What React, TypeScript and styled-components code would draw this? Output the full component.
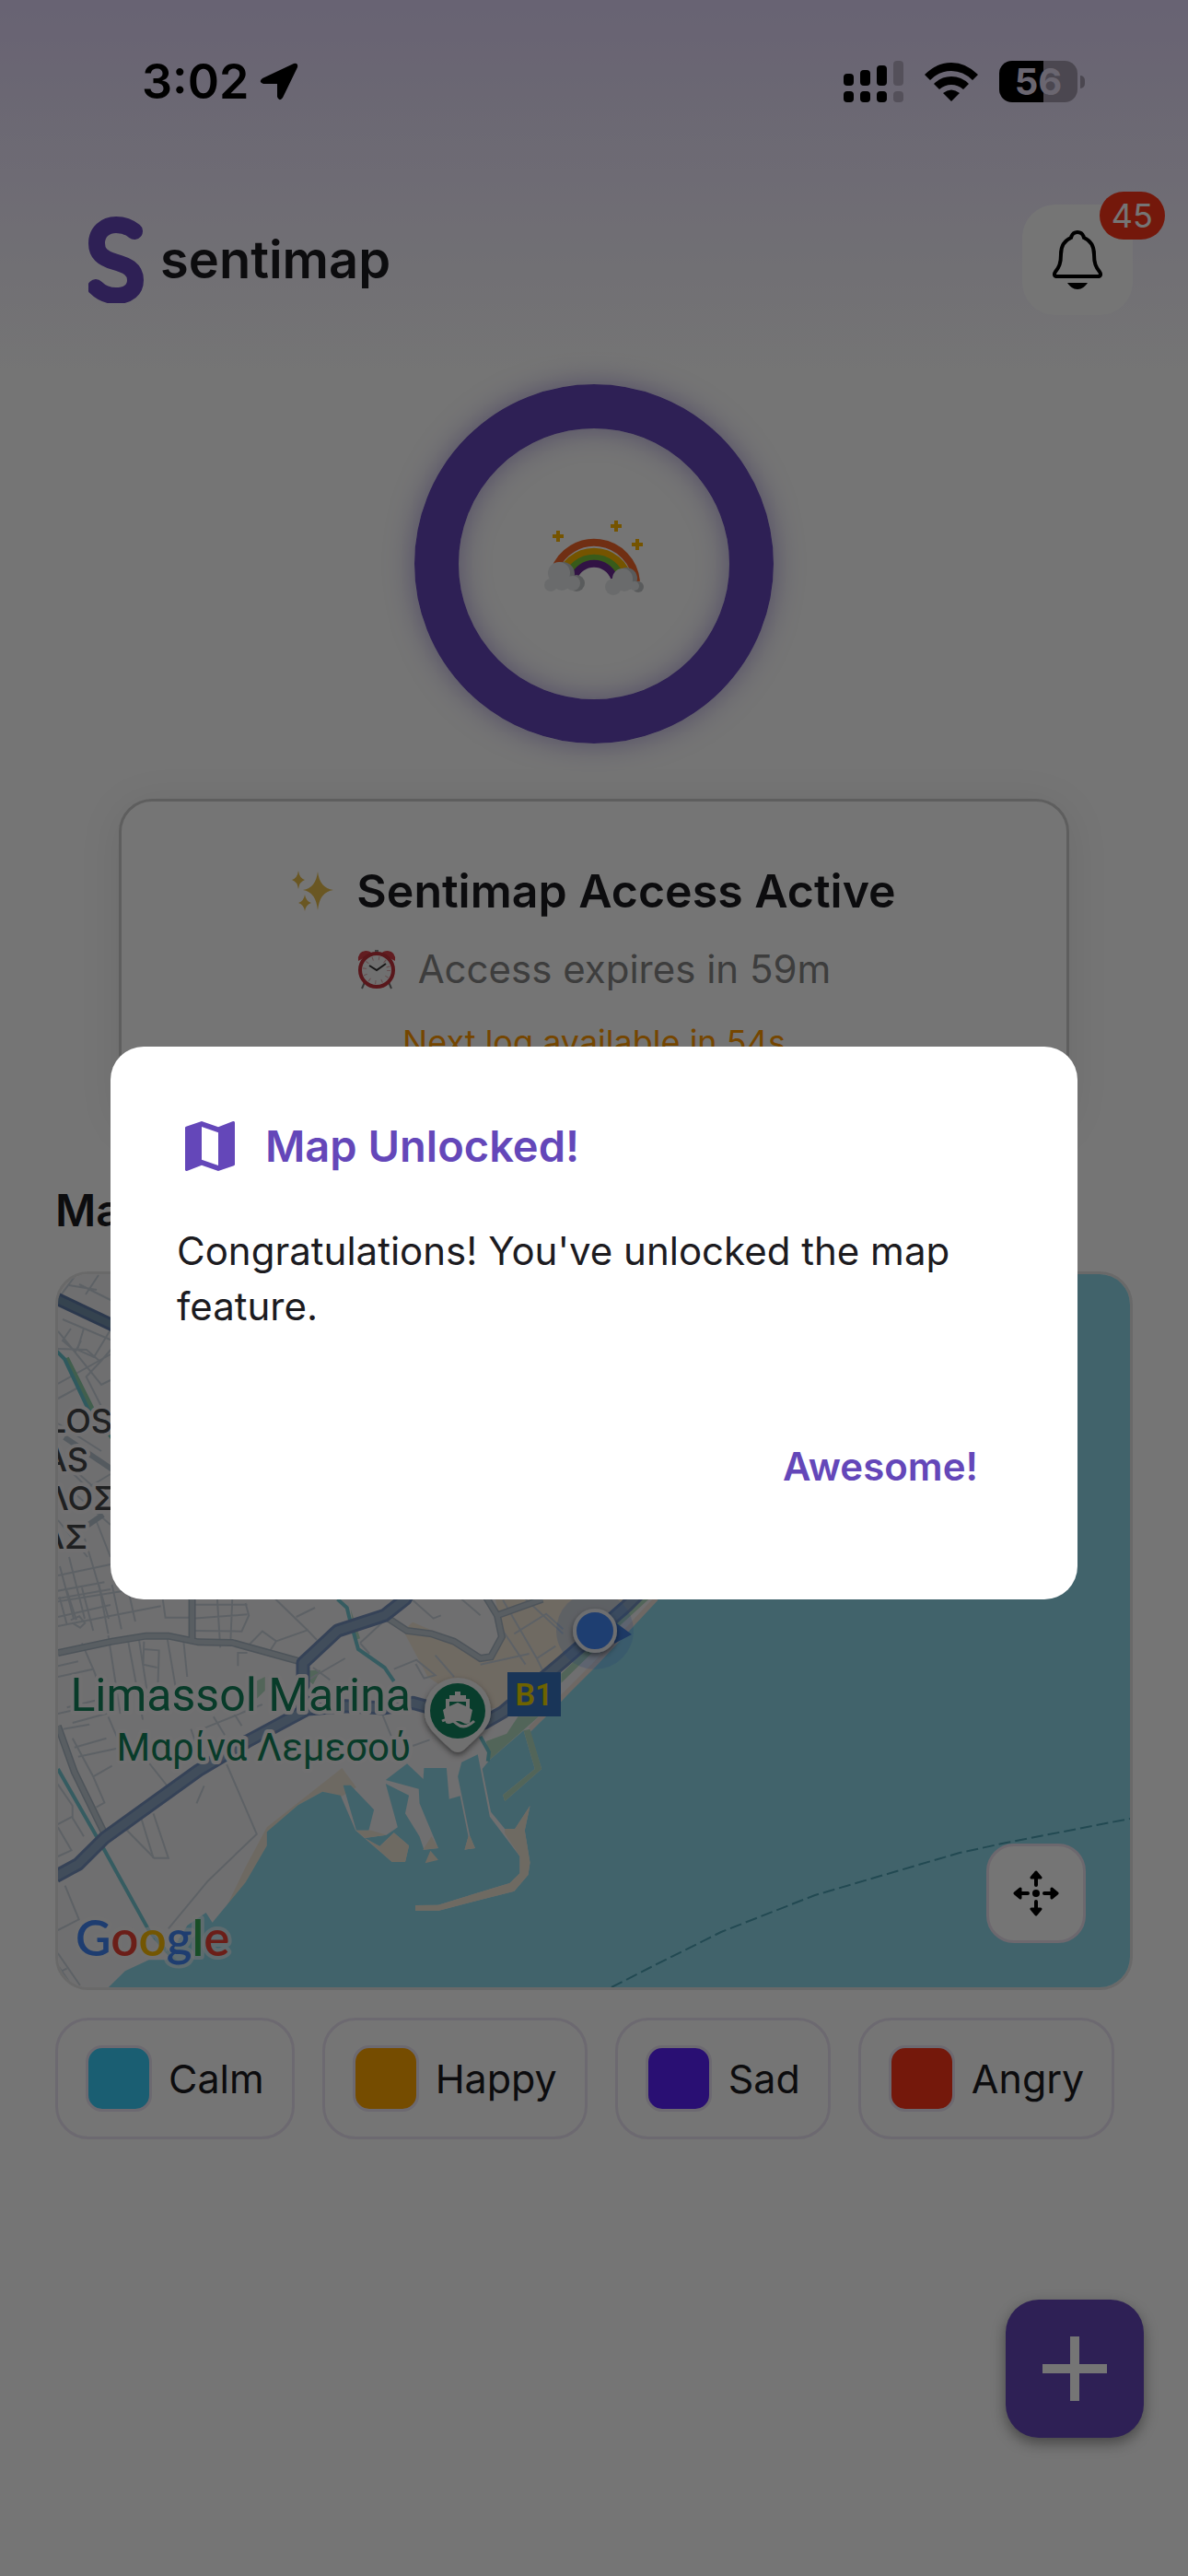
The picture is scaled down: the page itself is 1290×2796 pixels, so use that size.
import React, { useState } from "react";
import styled, { createGlobalStyle } from "styled-components";

const purple = "#6447b9";
const ink = "#1c1b1f";
const outline = "#ebe4f3";

const GlobalStyle = createGlobalStyle`
  *, *::before, *::after { box-sizing: border-box; }
  body {
    margin: 0;
    font-family: Inter, "Noto Sans", "Liberation Sans", sans-serif;
    color: ${ink};
    background: #fff;
  }
  button { font: inherit; color: inherit; border: 0; background: none; padding: 0; cursor: pointer; }
  h1, h2, p, ul { margin: 0; padding: 0; }
  svg { display: block; flex: none; }
`;

const Page = styled.div`
  min-height: 100vh;
  background: linear-gradient(180deg, #e2d7fa 0, #fefefe 400px);
`;

const StatusBar = styled.div`
  display: flex;
  justify-content: space-between;
  align-items: center;
  height: 177px;
  padding: 0 112px 0 154px;
  color: #000;
`;

const StatusGroup = styled.div<{ $gap: number }>`
  display: flex;
  align-items: center;
  gap: ${(p) => p.$gap}px;
`;

const Clock = styled.span`
  font-size: 52px;
  line-height: 60px;
  font-weight: 600;
`;

const Battery = styled.div`
  display: flex;
  align-items: center;
  gap: 3px;
  &::after {
    content: "";
    width: 5px;
    height: 14px;
    border-radius: 0 6px 6px 0;
    background: #a39cae;
  }
`;

const BatteryBody = styled.div`
  display: grid;
  place-items: center;
  width: 85px;
  height: 45px;
  border-radius: 14px;
  background: linear-gradient(90deg, #000 56%, #a39cae 56%);
  color: #e6def5;
  font-size: 40px;
  line-height: 45px;
  font-weight: 700;
`;

const Header = styled.header`
  display: flex;
  justify-content: space-between;
  align-items: center;
  padding: 45px 60px 75px 96px;
`;

const Brand = styled.div`
  display: flex;
  align-items: center;
  gap: 16px;
  font-size: 56px;
  line-height: 60px;
  font-weight: 600;
`;

const BellButton = styled.button`
  position: relative;
  display: grid;
  place-items: center;
  width: 120px;
  height: 120px;
  border-radius: 36px;
  background: #fff;
`;

const Badge = styled.span`
  position: absolute;
  top: -14px;
  right: -35px;
  padding: 0 13px;
  border-radius: 26px;
  background: #fd3519;
  color: #fff;
  font-size: 36px;
  line-height: 52px;
`;

const Ring = styled.div`
  display: grid;
  place-items: center;
  width: 390px;
  height: 390px;
  margin: 0 auto 60px;
  border: 48px solid ${purple};
  border-radius: 50%;
  box-shadow: 0 0 30px rgba(100, 71, 185, 0.5), inset 0 0 30px rgba(100, 71, 185, 0.5);
`;

const AccessCard = styled.section`
  display: flex;
  flex-direction: column;
  align-items: center;
  gap: 28px;
  margin: 0 129px 60px;
  padding: 67px 36px 66px;
  border: 3px solid #cecece;
  border-radius: 36px;
  background: #fff;
  box-shadow: 0 6px 48px rgba(0, 0, 0, 0.08);
`;

const CardLine = styled.div`
  display: flex;
  align-items: center;
  gap: 24px;
`;

const CardTitle = styled.h2`
  font-size: 50px;
  line-height: 60px;
  font-weight: 600;
`;

const Expiry = styled.p`
  font-size: 42px;
  line-height: 54px;
  color: #868686;
`;

const NextLog = styled.p`
  font-size: 36px;
  line-height: 48px;
  color: #ff9800;
`;

const MapSection = styled.section`
  padding: 0 60px;
`;

const SectionTitle = styled.h2`
  margin-bottom: 36px;
  font-size: 48px;
  line-height: 60px;
  font-weight: 600;
`;

const MapFrame = styled.div`
  position: relative;
  height: 780px;
  border: 3px solid #e4e4e4;
  border-radius: 36px;
  overflow: hidden;
`;

const MapDrawing = styled.svg`
  width: 100%;
  height: 100%;
`;

const RecenterButton = styled.button`
  position: absolute;
  right: 48px;
  bottom: 48px;
  display: grid;
  place-items: center;
  width: 108px;
  height: 108px;
  border: 3px solid #ece2f0;
  border-radius: 30px;
  background: #fff;
`;

const Legend = styled.ul`
  display: flex;
  flex-wrap: wrap;
  gap: 30px;
  margin-top: 30px;
  list-style: none;
`;

const LegendItem = styled.li`
  display: flex;
  align-items: center;
  gap: 18px;
  padding: 27px 30px;
  border: 3px solid ${outline};
  border-radius: 36px;
  font-size: 43px;
  line-height: 54px;
`;

const Swatch = styled.span<{ $color: string }>`
  width: 72px;
  height: 72px;
  border: 3px solid ${outline};
  border-radius: 18px;
  background: ${(p) => p.$color};
`;

const AddButton = styled.button`
  position: fixed;
  right: 48px;
  bottom: 150px;
  display: grid;
  place-items: center;
  width: 150px;
  height: 150px;
  border-radius: 36px;
  background: ${purple};
  box-shadow: 0 6px 15px rgba(0, 0, 0, 0.4);
`;

const Scrim = styled.div`
  position: fixed;
  inset: 0;
  display: flex;
  align-items: center;
  padding: 177px 120px 102px;
  background: rgba(0, 0, 0, 0.54);
`;

const Dialog = styled.div`
  flex: 1;
  padding: 72px;
  border-radius: 36px;
  background: #fff;
`;

const DialogTitle = styled.h1`
  display: flex;
  align-items: center;
  gap: 24px;
  color: ${purple};
  font-size: 47px;
  line-height: 72px;
  font-weight: 600;
`;

const DialogText = styled.p`
  margin: 48px 0 72px;
  font-size: 42px;
  line-height: 60px;
`;

const DialogActions = styled.div`
  display: flex;
  justify-content: flex-end;
`;

const DialogButton = styled.button`
  padding: 45px 36px;
  color: ${purple};
  font-size: 42px;
  line-height: 54px;
  font-weight: 600;
`;

const LocationArrow = () => (
  <svg width="42" height="42" viewBox="0 0 42 42" aria-hidden="true">
    <path d="M3 17 L37 1 Q42 0 41 5 L25 38 Q21 43 19 37 L19 23 L4 23 Q-2 21 3 17Z" fill="#000" />
  </svg>
);

const Signal = () => (
  <svg width="65" height="45" viewBox="0 0 65 45" aria-hidden="true">
    {[14, 10, 5, 0].map((top, i) => (
      <g key={top} fill={i === 3 ? "#b8afc5" : "#000"}>
        <rect x={i * 18} y={top} width="11" height={27 - top} rx="4" />
        <rect x={i * 18} y="33" width="11" height="12" rx="4" />
      </g>
    ))}
  </svg>
);

const Wifi = () => (
  <svg width="58" height="44" viewBox="0 0 58 44" aria-hidden="true">
    <path d="M0 14 Q13 1 29 1 Q45 1 58 14 L52 20 Q42 10 29 10 Q16 10 6 20Z" />
    <path d="M10 24 Q18 16 29 16 Q40 16 48 24 L42 30 Q36 25 29 25 Q22 25 16 30Z" />
    <path d="M20 34 Q29 27 38 34 L29 43Z" />
  </svg>
);

const Logo = () => (
  <svg width="62" height="94" viewBox="0 0 62 94" fill="none" aria-hidden="true">
    <path
      d="M50 16 C44 11 37 9 30 9 C18 9 9 17 9 29 C9 40 15 45 28 49 C42 53 51 57 51 69 C51 79 44 86 30 86 C21 86 14 83 8 77"
      stroke={purple}
      strokeWidth="18"
      strokeLinecap="round"
    />
  </svg>
);

const Bell = () => (
  <svg width="54" height="64" viewBox="0 0 54 64" fill="none" aria-hidden="true">
    <path
      d="M27 2 C23 2 21 4 20 8 C13 11 9 16 9 26 C9 36 7 40 3 45 C1 48 2 50 5 50 H49 C52 50 53 48 51 45 C47 40 45 36 45 26 C45 16 41 11 34 8 C33 4 31 2 27 2Z"
      stroke="#000"
      strokeWidth="4"
    />
    <path d="M16 57 H38 C35 61 32 64 27 64 C22 64 19 61 16 57Z" fill="#000" />
  </svg>
);

const Rainbow = () => (
  <svg width="110" height="110" viewBox="0 0 110 110" fill="none" aria-hidden="true">
    <g fill="#ffb800">
      {[[10, 21], [73, 10], [96, 30]].map(([x, y]) => (
        <path key={x} d={`M${x + 4} ${y - 2}h4v4h4v4h-4v4h-4v-4h-4v-4h4z`} />
      ))}
    </g>
    <g strokeWidth="8">
      <path d="M12 62 A46 46 0 0 1 101 74" stroke="#f4672a" />
      <path d="M17 74 A38.5 38.5 0 0 1 93 74" stroke="#ffb800" />
      <path d="M25 72 A31 31 0 0 1 85 72" stroke="#7ac63a" />
      <path d="M33 70 A23.5 23.5 0 0 1 77 70" stroke="#6c2a94" />
    </g>
    <g fill="#c3c6c8">
      <circle cx="21" cy="66" r="13" />
      <circle cx="36" cy="76" r="9" />
      <circle cx="90" cy="71" r="12" />
      <circle cx="103" cy="80" r="6" />
    </g>
    <g fill="#e7eaeb">
      <circle cx="17" cy="65" r="12" />
      <circle cx="8" cy="78" r="7" />
      <circle cx="32" cy="76" r="8" />
      <circle cx="20" cy="74" r="10" />
      <circle cx="86" cy="71" r="11" />
      <circle cx="76" cy="80" r="9" />
      <circle cx="88" cy="76" r="9" />
      <circle cx="99" cy="79" r="5" />
    </g>
  </svg>
);

const Sparkles = () => (
  <svg width="46" height="44" viewBox="0 0 46 44" fill="#e7bd4c" aria-hidden="true">
    <path d="M28 1 Q30 19 45 21 Q30 23 28 43 Q26 23 12 21 Q26 19 28 1Z" />
    <path d="M7 0 Q8 8 14 10 Q8 12 7 20 Q6 12 0 10 Q6 8 7 0Z" />
    <path d="M14 26 Q15 33 21 35 Q15 37 14 44 Q13 37 7 35 Q13 33 14 26Z" />
  </svg>
);

const AlarmClock = () => (
  <svg width="42" height="44" viewBox="0 0 42 44" fill="none" aria-hidden="true">
    <path d="M8 36 L5 43 M34 36 L37 43" stroke="#777" strokeWidth="2" />
    <path d="M1 13 Q0 3 9 2 Q14 2 16 5Z M41 13 Q42 3 33 2 Q28 2 26 5Z" fill="#d63f48" />
    <path d="M21 1 V5" stroke="#888" strokeWidth="4" />
    <circle cx="21" cy="23" r="18" fill="#f4f4f4" stroke="#c2323c" strokeWidth="4" />
    <circle cx="21" cy="23" r="13" stroke="#dba5a9" strokeWidth="4" strokeDasharray="1 6" />
    <path d="M13 18 L21 23 L31 16" stroke="#333" strokeWidth="2" />
  </svg>
);

const MapIcon = () => (
  <svg width="72" height="72" viewBox="0 0 24 24" fill={purple} aria-hidden="true">
    <path d="M20.5 3l-.16.03L15 5.1 9 3 3.36 4.9c-.21.07-.36.25-.36.48V20.5c0 .28.22.5.5.5l.16-.03L9 18.9l6 2.1 5.64-1.9c.21-.07.36-.25.36-.48V3.5c0-.28-.22-.5-.5-.5zM15 19l-6-2.11V5l6 2.11V19z" />
  </svg>
);

const Recenter = () => (
  <svg width="50" height="50" viewBox="-25 -25 50 50" aria-hidden="true">
    <circle r="4" />
    {[0, 90, 180, 270].map((angle) => (
      <g key={angle} transform={`rotate(${angle})`}>
        <path d="M0 -9 V-18" stroke="#000" strokeWidth="4" strokeLinecap="round" />
        <path d="M0 -23 L5 -17 H-5Z" stroke="#000" strokeWidth="3" strokeLinejoin="round" />
      </g>
    ))}
  </svg>
);

const Plus = () => (
  <svg width="70" height="70" viewBox="0 0 70 70" fill="#fff" aria-hidden="true">
    <path d="M30 0h10v30h30v10H40v30H30V40H0V30h30z" />
  </svg>
);

const halo = { stroke: "#f6f5f7", strokeWidth: 8, strokeLinejoin: "round", paintOrder: "stroke" } as const;

const streets = [
  "M56 55L335 0M56 135L160 110L330 70M56 20L180 -8M60 40L80 130M80 20L105 115M120 10L150 150M165 0L190 160M200 0L225 145M240 0L262 120",
  "M90 115L113 103L128 125L115 140L95 125M335 47L342 107L413 107M413 65H560M413 110L560 97M413 150L545 152L564 100L555 60M480 47L488 205M520 47L515 195",
  "M190 165L222 420M240 165L282 440M270 165L300 400M285 185L283 260L320 270M285 210L325 214L322 330L345 345M345 160L370 340M390 180L400 300",
  "M56 265L110 250M56 300L150 275L180 370L80 400M120 190L155 290L185 420L95 450M56 420L130 400M70 470L140 455M100 530L185 500M110 560L225 530L190 430",
  "M95 500L150 625L200 590M150 625L180 710L158 725M285 560L350 660M350 660L240 800L312 890H350L310 745M445 655L425 712",
  "M505 585L585 812L455 965L350 1120M75 980L112 1090L56 1125M56 650L95 720L95 760L125 820M56 780L95 755M56 885L92 865L56 790",
  "M56 1200L115 1305M56 1240L90 1300M66 1258L80 1250",
  "M565 195L600 152L637 184L615 225M637 184L720 148L635 47M535 265V222H560M690 105L740 75M720 148L745 180",
  "M860 190L935 105M860 190L885 225M820 240L700 325M735 270L780 310M950 275L1010 245L1060 295L1030 305L1008 258M1060 230L1110 300",
  "M1000 50L1055 110L1075 100M1130 47L1180 100M1240 150L1300 260M1240 50L1330 240L1380 200M1300 47L1400 160M1270 160L1355 95L1400 145M1180 260L1310 225M1330 240L1350 290",
  "M920 425L945 500M1000 525L1045 505M270 730L310 890M440 470L600 390M470 430L500 490M520 410L545 460M410 470L435 560",
];

const northStreets = [
  "M86 1394L122 1412M75 1395L105 1400M93 1405L107 1384M63 1410L83 1383M68 1432L122 1455M63 1445L110 1503L122 1497M77 1442L68 1455L82 1467L88 1455",
  "M91 1442L84 1465L102 1473L122 1440M63 1464L94 1465L109 1478L93 1495M109 1478L122 1463M63 1502L120 1470M63 1518L85 1506M94 1495L122 1550M85 1506L108 1545",
  "M63 1545L110 1575M63 1580L120 1630M70 1590L95 1615L120 1600M80 1620L120 1655M63 1650L95 1690M105 1652L120 1690M63 1710L120 1698M63 1735L120 1725M63 1755L120 1742M75 1690L92 1757M92 1670L118 1757M65 1700L80 1757",
];

const CityMap = () => (
  <MapDrawing viewBox="63 1383 1164 774" preserveAspectRatio="xMidYMid slice" role="img" aria-label="Map of Limassol">
    <defs>
      <filter id="pinShadow" x="-30%" y="-30%" width="160%" height="160%">
        <feDropShadow dx="0" dy="3" stdDeviation="3" floodOpacity="0.5" />
      </filter>
    </defs>
    <rect x="0" y="1300" width="1290" height="900" fill="#f2f1f3" />
    <g transform="translate(40 1720) scale(.40816 .33333)" fill="none">
      <path d="M975 150L1000 122L1120 185L1180 240L1208 235L1237 150L1220 47L1240 0H1650L1240 405L1155 395L1040 300Z" fill="#f2e6d5" />
      <path d="M612 850L560 985L465 1100L500 1060L555 920L612 790L812 597L850 660L810 690L760 674L695 718Z" fill="#eee5d6" />
      <path
        d="M190 1312L235 1258L298 1222H345L400 1110L450 1068L467 1100L555 970L612 850V805L695 718L760 674L808 686L848 800L945 903H980L990 850L950 808L912 852L872 825L930 815L960 790L928 648L990 686L980 745L1018 820L1030 863L1068 858L1018 712L1016 665L928 636L985 583L1028 633L1030 597H1090L1097 698L1126 688L1148 820L1138 863L1166 858L1152 818L1120 625L1130 578L1173 553L1205 755L1285 885V940L1258 972L1068 1043L1007 1044V1061H1070L1270 998L1307 945L1312 905L1298 800L1312 720L1272 795H1245L1208 740L1185 600L1205 570L1295 475L1325 600L1240 685L1245 705L1343 600L1312 480L1395 380L1530 200L1585 135L1648 45L1900 -300L2100 -1100H3000V1350H190Z"
        fill="#8fd8e9"
      />
      <path d="M815 653H835L897 733L883 800H850Z" fill="#8fd8e9" />
      <path d="M850 800L945 903H980L990 850L950 808L912 852L872 825L930 815L890 800Z M1068 1043L1258 972L1285 940V885L1245 810L1245 795H1272L1312 720L1298 800L1312 905L1307 945L1270 998L1070 1061H1007V1044Z M1033 907L1047 866L1068 896Z M1148 820L1138 863L1166 858L1152 818Z M1027 863L1050 820L1068 858Z" fill="#f0e6d6" />
      <path d="M1195 510L1250 485L1280 430H1335L1205 570Z M1295 475L1325 600L1240 685L1245 705L1343 600L1312 470Z M1395 320L1545 140L1630 45L1600 47L1395 290Z M720 280L755 278L735 325L720 310Z M582 315L607 300V345L582 375Z M835 80L860 175L848 180Z" fill="#b4dcc2" />
      <path d="M1312 470L1480 265L1648 45" stroke="#efe2db" strokeWidth="5" vectorEffect="non-scaling-stroke" />
      {streets.map((d) => (
        <path key={d} d={d} stroke="#cbd4dd" strokeWidth="2" vectorEffect="non-scaling-stroke" />
      ))}
      <g stroke="#74c9d4" strokeWidth="4">
        <path d="M800 47L825 75L832 110L855 210L925 270L950 315" vectorEffect="non-scaling-stroke" />
        <path d="M56 600L180 865L300 1130L350 1200L380 1240" vectorEffect="non-scaling-stroke" />
        <path d="M1180 495L1203 545L1200 575" vectorEffect="non-scaling-stroke" />
      </g>
      {[["#a9b7c4", 8], ["#c2cdd6", 5]].map(([stroke, width]) => (
        <g key={stroke} stroke={stroke as string} strokeWidth={width}>
          <path d="M56 222L200 185L290 167H350L430 187L520 189L700 250" vectorEffect="non-scaling-stroke" />
          <path d="M413 0V185" vectorEffect="non-scaling-stroke" />
          <path d="M935 110L985 150L1050 160L1110 185L1180 240L1208 235L1237 170L1225 100L1185 20M1225 100L1345 47" vectorEffect="non-scaling-stroke" />
          <path d="M56 460L100 610L180 810" vectorEffect="non-scaling-stroke" />
        </g>
      ))}
      {[["#7590bd", 15], ["#8ea9c7", 9]].map(([stroke, width]) => (
        <g key={stroke} stroke={stroke as string} strokeWidth={width} strokeLinejoin="round">
          <path d="M50 950L110 910L180 825L430 605L560 510L720 405L820 395L925 402L1000 385L1060 405L1190 450L1240 415L1400 250L1568 70L1650 -30" vectorEffect="non-scaling-stroke" />
          <path d="M708 400V255L800 150L925 100L980 47L1000 0" vectorEffect="non-scaling-stroke" />
        </g>
      ))}
    </g>
    {northStreets.map((d) => (
      <path key={d} d={d} fill="none" stroke="#cbd4dd" strokeWidth="2" />
    ))}
    <g fill="none">
      <path d="M72 1474L100 1530L122 1560" stroke="#8fcfa9" strokeWidth="6" />
      <path d="M60 1465L70 1475L96 1530L122 1560" stroke="#68c3ce" strokeWidth="4" />
      <path d="M70 1560L125 1597M93 1657L112 1644" stroke="#b7c4d0" strokeWidth="6" />
      <path d="M58 1408L130 1442" stroke="#5f7ba9" strokeWidth="14" />
      <path d="M58 1408L130 1442" stroke="#7592ad" strokeWidth="8" />
      <path d="M664 2157L707 2135L783 2097L885 2057L1042 2011L1093 2000L1227 1974" stroke="#4a9fb2" strokeWidth="2" strokeDasharray="13 5" />
    </g>
    <g fontFamily='Inter, "Noto Sans", sans-serif' fontSize="36" fontWeight="500" fill="#454749" textAnchor="end" {...halo}>
      <text x="122" y="1555">APOSTOLOS</text>
      <text x="96" y="1597">ANDREAS</text>
      <text x="126" y="1639">ΑΠΟΣΤΟΛΟΣ</text>
      <text x="95" y="1681">ΑΝΔΡΕΑΣ</text>
    </g>
    <g fontFamily='Roboto, "Noto Sans", sans-serif' fill="#12805b" textAnchor="end" {...halo}>
      <text x="446" y="1857" fontSize="50">Limassol Marina</text>
      <text x="446" y="1911" fontSize="42">Μαρίνα Λεμεσού</text>
    </g>
    <g filter="url(#pinShadow)">
      <path d="M461 1857A36 36 0 1 1 533 1857C533 1873 524 1880 504 1899Q497 1905 490 1899C470 1880 461 1873 461 1857Z" fill="#f4f4f4" />
    </g>
    <circle cx="497" cy="1857" r="30" fill="#128560" />
    <g fill="#f4f4f4">
      <path d="M494 1836h6v4h6v4h4v10l3 2-3 14q-4 2-7 0-6-4-12 0-4 2-7 0l-3-14 3-2v-10h4v-4h6z" />
      <path d="M488 1847h18v5l-9-4-9 4z" fill="#128560" />
      <path d="M480 1868Q488 1864 496 1871T515 1868" fill="none" stroke="#f4f4f4" strokeWidth="3" />
    </g>
    <rect x="551" y="1815" width="58" height="48" fill="#3874bf" />
    <text x="580" y="1851" textAnchor="middle" fontFamily="Roboto, sans-serif" fontSize="34" fontWeight="600" fill="#f0d800">B1</text>
    <circle cx="646" cy="1770" r="42" fill="#4285f4" fillOpacity="0.2" />
    <path d="M667 1760L686 1774L667 1784Z" fill="#3f7cdc" />
    <circle cx="646" cy="1770" r="22" fill="#4387f6" stroke="#eef0f5" strokeWidth="4" filter="url(#pinShadow)" />
    <text x="82" y="2123" fontFamily="Lato, Inter, sans-serif" fontSize="53" fontWeight="600" {...halo} strokeOpacity="0.6">
      <tspan fill="#4285f4">G</tspan>
      <tspan fill="#ea4335">o</tspan>
      <tspan fill="#fbbc05">o</tspan>
      <tspan fill="#4285f4">g</tspan>
      <tspan fill="#34a853">l</tspan>
      <tspan fill="#ea4335">e</tspan>
    </text>
  </MapDrawing>
);

const moods = [
  { name: "Calm", color: "#39cef8" },
  { name: "Happy", color: "#ffa500" },
  { name: "Sad", color: "#5b21fa" },
  { name: "Angry", color: "#fd3519" },
];

export default function App() {
  const [dialogOpen, setDialogOpen] = useState(true);

  return (
    <>
      <GlobalStyle />
      <Page>
        <StatusBar>
          <StatusGroup $gap={12}>
            <Clock>3:02</Clock>
            <LocationArrow />
          </StatusGroup>
          <StatusGroup $gap={23}>
            <Signal />
            <Wifi />
            <Battery>
              <BatteryBody>56</BatteryBody>
            </Battery>
          </StatusGroup>
        </StatusBar>

        <Header>
          <Brand>
            <Logo />
            sentimap
          </Brand>
          <BellButton aria-label="Notifications">
            <Bell />
            <Badge>45</Badge>
          </BellButton>
        </Header>

        <main>
          <Ring>
            <Rainbow />
          </Ring>

          <AccessCard>
            <CardLine>
              <Sparkles />
              <CardTitle>Sentimap Access Active</CardTitle>
            </CardLine>
            <CardLine>
              <AlarmClock />
              <Expiry>Access expires in 59m</Expiry>
            </CardLine>
            <NextLog>Next log available in 54s</NextLog>
          </AccessCard>

          <MapSection>
            <SectionTitle>Map</SectionTitle>
            <MapFrame>
              <CityMap />
              <RecenterButton aria-label="Recenter map">
                <Recenter />
              </RecenterButton>
            </MapFrame>
            <Legend>
              {moods.map((mood) => (
                <LegendItem key={mood.name}>
                  <Swatch $color={mood.color} />
                  {mood.name}
                </LegendItem>
              ))}
            </Legend>
          </MapSection>
        </main>

        <AddButton aria-label="Add log">
          <Plus />
        </AddButton>
      </Page>

      {dialogOpen && (
        <Scrim>
          <Dialog role="dialog" aria-modal="true" aria-labelledby="dialog-title">
            <DialogTitle id="dialog-title">
              <MapIcon />
              Map Unlocked!
            </DialogTitle>
            <DialogText>Congratulations! You've unlocked the map feature.</DialogText>
            <DialogActions>
              <DialogButton onClick={() => setDialogOpen(false)}>Awesome!</DialogButton>
            </DialogActions>
          </Dialog>
        </Scrim>
      )}
    </>
  );
}
